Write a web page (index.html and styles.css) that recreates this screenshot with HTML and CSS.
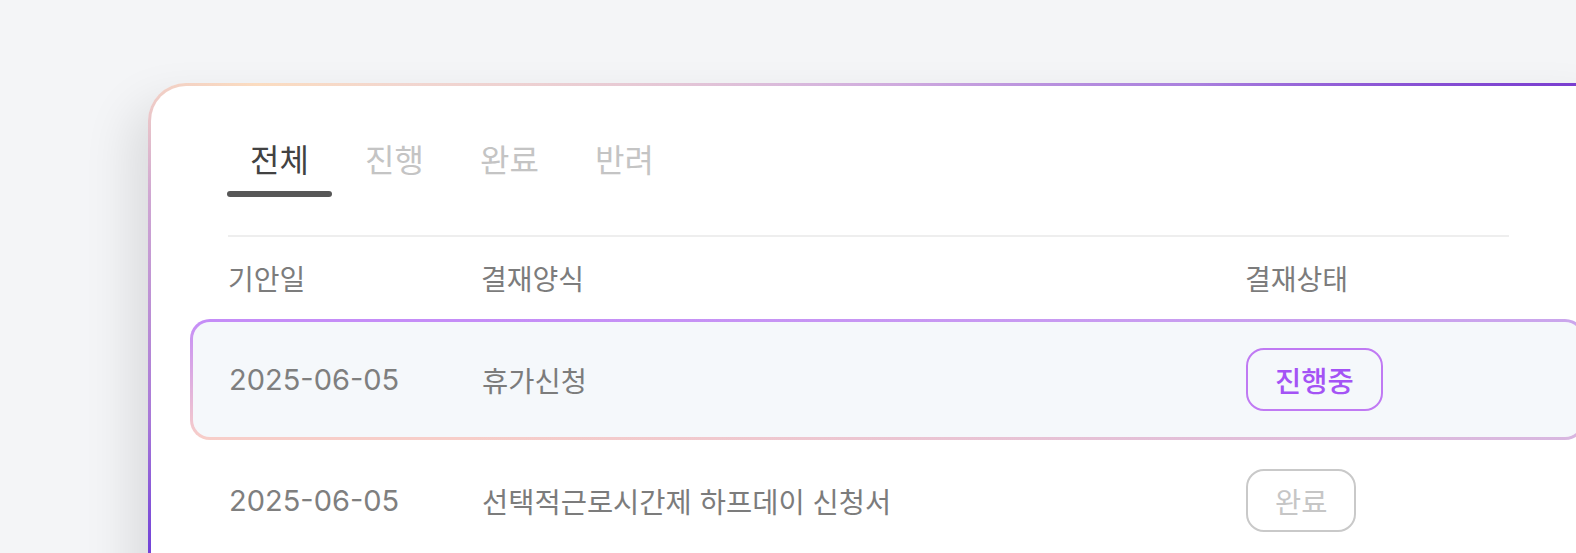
FILE: index.html
```html
<!DOCTYPE html>
<html lang="ko">
<head>
<meta charset="utf-8">
<title>결재 목록</title>
<link rel="stylesheet" href="styles.css">
</head>
<body>
<main class="card">
  <nav class="tabs">
    <div class="tab active">전체</div>
    <div class="tab">진행</div>
    <div class="tab">완료</div>
    <div class="tab">반려</div>
  </nav>
  <div class="divider"></div>
  <div class="head">
    <div class="cell">기안일</div>
    <div class="cell">결재양식</div>
    <div class="cell">결재상태</div>
  </div>
  <div class="row selected">
    <div class="cell date">2025-06-05</div>
    <div class="cell">휴가신청</div>
    <div class="cell"><span class="badge progress">진행중</span></div>
  </div>
  <div class="row">
    <div class="cell date">2025-06-05</div>
    <div class="cell">선택적근로시간제 하프데이 신청서</div>
    <div class="cell"><span class="badge done">완료</span></div>
  </div>
</main>
</body>
</html>
```
FILE: styles.css
```css
html, body {
  margin: 0;
  padding: 0;
  overflow: hidden;
  background: #f4f5f7;
  width: 1576px;
  height: 553px;
}
body {
  font-family: "Inter", "Noto Sans CJK KR", sans-serif;
}
.card {
  box-sizing: border-box;
  width: 1480px;
  min-height: 620px;
  margin: 83px 0 0 148px;
  padding: 50px 120px 0 76px;
  border: 3px solid transparent;
  border-radius: 38px;
  background:
    linear-gradient(#ffffff, #ffffff) padding-box,
    conic-gradient(from 0deg at 750px 300px,
      #cfaade 0deg,
      #aa80de 45deg,
      #7b3fd0 66deg,
      #7040d8 257deg,
      #a878d8 267deg,
      #cfa6d2 284deg,
      #ecc8c8 290deg,
      #fbdcc0 295deg,
      #f2d6cf 301deg,
      #d8b8dc 342deg,
      #cfaade 360deg) border-box;
  box-shadow: -18px 20px 48px rgba(0, 0, 0, 0.1);
}
.tabs {
  display: flex;
  gap: 10px;
  font-family: "Noto Sans CJK KR", sans-serif;
}
.tab {
  display: flex;
  flex-direction: column;
  width: 105px;
  align-items: center;
  font-size: 32px;
  line-height: 44px;
  color: #c4c4c4;
}
.tab::after {
  content: "";
  display: block;
  width: 100%;
  height: 6px;
  margin-top: 11px;
  border-radius: 3px;
  background: transparent;
}
.tab.active {
  color: #424242;
}
.tab.active::after {
  background: #575757;
}
.divider {
  height: 2px;
  margin-top: 38px;
  margin-left: 1px;
  margin-right: -4px;
  background: #eeeeee;
}
.head, .row {
  display: grid;
  grid-template-columns: 253px 764px 1fr;
  align-items: center;
  color: #7c7c7c;
  font-family: "Noto Sans CJK KR", sans-serif;
}
.head {
  height: 82px;
  font-size: 28px;
  padding-left: 1px;
}
.row {
  box-sizing: border-box;
  height: 121px;
  margin: 0 -80px 0 -37px;
  padding: 0 78px 0 36px;
  border: 3px solid transparent;
  border-radius: 20px;
  font-size: 28.5px;
}
.row.selected {
  background:
    linear-gradient(#f5f8fb, #f5f8fb) padding-box,
    linear-gradient(to right, rgba(200, 170, 230, 0) 20%, rgba(205, 175, 232, 0.75) 100%) border-box,
    linear-gradient(to bottom, #c48cf8, #f8cfc8) border-box;
}
.cell.date {
  font-family: "Inter", sans-serif;
  font-size: 29px;
  color: #7f7f7f;
}
.badge {
  box-sizing: border-box;
  display: inline-flex;
  align-items: center;
  height: 63px;
  padding: 0 27px;
  border-radius: 18px;
  font-size: 28.5px;
  border: 2px solid;
}
.badge.progress {
  color: #a453f5;
  border-color: #c07af3;
  font-weight: 500;
}
.badge.done {
  color: #c6c6c6;
  border-color: #c9c9c9;
  background: #ffffff;
}
```
